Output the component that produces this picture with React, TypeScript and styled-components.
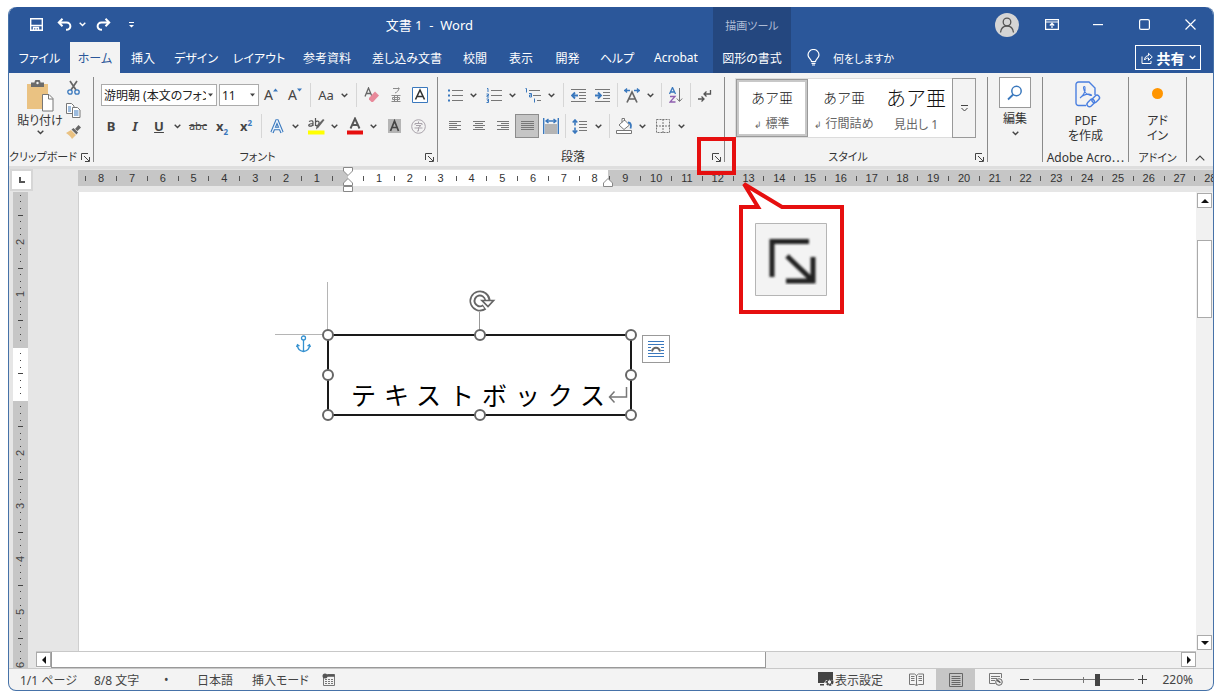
import React from 'react';
import styled, { createGlobalStyle, css } from 'styled-components';

const BLUE = '#2b579a';
const ACCENT = '#3a78bd';
const INK = '#444';
const RED = '#e60f0f';
const UI_FONT = '"Noto Sans", "Noto Sans CJK JP", sans-serif';

const GlobalStyle = createGlobalStyle`
  *, *::before, *::after { box-sizing: border-box; }
  body { margin: 0; background: #fff; font-family: ${UI_FONT}; font-size: 12px; font-feature-settings: "palt"; color: #333; }
  button, select, input { font: inherit; color: inherit; font-feature-settings: inherit; margin: 0; }
  button { padding: 0; border: 0; background: none; display: inline-flex; align-items: center; justify-content: center; white-space: nowrap; }
  svg { display: block; flex: none; }
`;

const Desktop = styled.div`
  padding: 7px 9px 8px 8px;
`;
const Window = styled.div`
  position: relative;
  display: flex;
  flex-direction: column;
  min-height: calc(100vh - 15px);
  border: solid #4672a8;
  border-width: 0 1px 1px;
  border-radius: 8px;
  background: #f3f3f3;
`;

/* ---------- title bar and tabs ---------- */
const Header = styled.header`
  display: grid;
  grid-template-columns: 704px 78px 1fr;
  grid-template-rows: 35px 31px;
  background: ${BLUE};
  color: #fff;
  border-radius: 8px 8px 0 0;
`;
const TitleLeft = styled.div`
  display: flex;
  align-items: center;
  padding-left: 13px;
`;
const QuickButton = styled.button<{ $w: number }>`
  width: ${(p) => p.$w}px;
  height: 28px;
`;
const DocTitle = styled.h1`
  margin: 0 0 0 auto;
  padding-right: 240px;
  font-size: 13px;
  font-weight: 400;
  white-space: pre;
`;
const ContextTitle = styled.div`
  display: flex;
  align-items: center;
  justify-content: center;
  background: #24477f;
  color: #aebcd5;
  font-size: 11px;
`;
const TitleRight = styled.div`
  display: flex;
  align-items: center;
  justify-content: flex-end;
`;
const Avatar = styled.button`
  width: 24px;
  height: 24px;
  border-radius: 50%;
  background: #d5d5d5;
  margin-right: 10px;
`;
const WinButton = styled.button`
  width: 46px;
  height: 32px;
`;
const Tabs = styled.nav`
  display: flex;
`;
const Tab = styled.button<{ $active?: boolean; $w: number }>`
  width: ${(p) => p.$w}px;
  ${(p) => p.$active && css`background: #f3f3f3; color: ${BLUE};`}
`;
const ContextTab = styled.button`
  background: #24477f;
`;
const TabsRight = styled.div`
  display: flex;
  align-items: center;
  justify-content: space-between;
  padding: 0 12px 0 16px;
`;
const Tell = styled.button`
  gap: 13px;
  font-size: 11px;
`;
const Share = styled.button`
  width: 66px;
  height: 25px;
  gap: 4px;
  border: 1px solid #fff;
  font-size: 14px;
  font-weight: 700;
`;

/* ---------- ribbon ---------- */
const Ribbon = styled.section`
  display: flex;
  height: 93px;
  padding-top: 4px;
`;
const Divider = styled.div`
  width: 1px;
  margin-bottom: 4px;
  background: #8a8a8a;
`;
const Group = styled.div<{ $w: number }>`
  width: ${(p) => p.$w}px;
  display: flex;
  flex-direction: column;
`;
const GroupBody = styled.div`
  height: 72px;
  display: flex;
`;
const GroupLabel = styled.div<{ $kana?: boolean }>`
  display: flex;
  height: 16px;
  line-height: 18px;
  font-size: ${(p) => (p.$kana ? 11 : 12)}px;
  align-items: center;
  white-space: nowrap;
  > span { flex: 1; text-align: center; }
`;
const LauncherButton = styled.button`
  position: relative;
  width: 16px;
  height: 16px;
`;
const LaunchMark = styled.span`
  position: absolute;
  left: -11px;
  top: -12px;
  width: 39px;
  height: 38px;
  border: 4px solid ${RED};
  z-index: 2;
`;
const Rows = styled.div`
  display: flex;
  flex-direction: column;
  gap: 7px;
  padding: 6px 0 0 5px;
`;
const Row = styled.div`
  display: flex;
  height: 24px;
  align-items: center;
`;
const Tool = styled.button<{ $on?: boolean }>`
  width: 24px;
  height: 24px;
  color: ${INK};
  ${(p) => p.$on && css`background: #c5c5c5; border: 1px solid #8c8c8c;`}
`;
const DropTool = styled.button`
  width: 15px;
  height: 24px;
  padding-left: 3px;
  justify-content: flex-start;
`;
const Sep = styled.div<{ $w?: number }>`
  width: ${(p) => p.$w ?? 5}px;
  height: 24px;
  display: flex;
  justify-content: center;
  &::before { content: ""; width: 1px; background: #d6d6d6; }
`;
const Glyph = styled.span<{ $bold?: boolean; $italic?: boolean; $line?: string; $size?: number }>`
  font-size: ${(p) => p.$size ?? 14}px;
  font-weight: ${(p) => (p.$bold ? 700 : 400)};
  font-style: ${(p) => (p.$italic ? 'italic' : 'normal')};
  text-decoration: ${(p) => p.$line ?? 'none'};
  line-height: 16px;
  sub, sup { font-size: 8px; line-height: 1px; color: ${ACCENT}; }
`;
const Field = styled.label<{ $w: number }>`
  position: relative;
  width: ${(p) => p.$w}px;
  height: 22px;
  margin-left: 2px;
  border: 1px solid #ababab;
  background: #fff;
  svg { position: absolute; right: 3px; top: 8px; pointer-events: none; }
`;
const FieldSelect = styled.select`
  appearance: none;
  width: 100%;
  height: 20px;
  padding: 0 10px 0 2px;
  border: 0;
  background: none;
  font-size: 12px;
  color: #222;
`;

const Paste = styled.button`
  width: 52px;
  height: 66px;
  margin: 1px 0 0 5px;
  padding-top: 2px;
  flex-direction: column;
  justify-content: flex-start;
  gap: 1px;
  line-height: 16px;
`;
const ClipTools = styled.div`
  display: flex;
  flex-direction: column;
  button { width: 15px; height: 22px; }
`;

const Gallery = styled.div`
  display: flex;
  height: 60px;
  margin: 1px 0 0 10px;
  border: 1px solid #dcdcdc;
  border-right: 0;
  background: #fff;
`;
const StyleItem = styled.button<{ $on?: boolean }>`
  width: 72px;
  height: 58px;
  padding-top: 1px;
  flex-direction: column;
  ${(p) => p.$on && css`border: 3px solid #c8c8c8; outline: 1px solid #9a9a9a; outline-offset: -1px;`}
`;
const Sample = styled.span<{ $size: number }>`
  height: 32px;
  line-height: 32px;
  font-size: ${(p) => p.$size}px;
  font-weight: 300;
  font-feature-settings: normal;
  color: #111;
`;
const SampleName = styled.span`
  line-height: 20px;
  color: #666;
  small { font-size: 9px; }
`;
const MoreStyles = styled.button`
  width: 24px;
  height: 60px;
  margin: -1px 0 0;
  border: 1px solid #999;
  background: #f3f3f3;
`;
const BigButton = styled.button`
  flex: 1;
  height: 72px;
  flex-direction: column;
  justify-content: flex-start;
  line-height: 15px;
`;
const FindBox = styled.span`
  display: flex;
  align-items: center;
  justify-content: center;
  width: 32px;
  height: 31px;
  margin-bottom: 3px;
  border: 1px solid #999;
  background: #fff;
`;
const DropMark = styled.span`
  padding-top: 5px;
`;
const BigIcon = styled.span`
  display: flex;
  align-items: center;
  height: 36px;
  color: ${ACCENT};
`;
const Dot = styled.span`
  width: 11px;
  height: 11px;
  margin: -4px 0 0;
  border-radius: 50%;
  background: #ff9500;
`;
const Collapse = styled.button`
  flex: 1;
  align-self: flex-end;
  height: 16px;
`;

/* ---------- rulers ---------- */
const RulerRow = styled.div`
  display: flex;
  height: 26px;
  border-top: 3px solid #dedede;
  background: #e6e6e6;
`;
const TabCorner = styled.button`
  width: 23px;
  height: 22px;
  margin: 0 45px 0 1px;
  border: 2px solid #d6d6d6;
  background: #fff;
`;
const HRuler = styled.div`
  flex: 1;
  height: 16px;
  margin-top: 1px;
  display: flex;
  overflow: hidden;
  background: linear-gradient(to right, #c6c6c6 270px, #fff 270px, #fff 530px, #c6c6c6 530px);
`;
const HScale = styled.div<{ $n: number; $w: number }>`
  flex: none;
  display: grid;
  grid-template-columns: repeat(${(p) => p.$n}, minmax(0, 1fr));
  width: ${(p) => p.$w}px;
  &:first-child { margin-right: 16px; }
`;
const HMark = styled.span`
  display: flex;
  justify-content: center;
  font: 11px/17px "Liberation Sans", sans-serif;
  color: #333;
`;
const HTick = styled.i`
  align-self: center;
  width: 1px;
  height: 5px;
  background: #555;
`;
const Indent = styled.svg<{ $x: number; $y: number }>`
  position: absolute;
  left: ${(p) => p.$x}px;
  top: ${(p) => p.$y}px;
`;
const Work = styled.main`
  flex: 1;
  display: flex;
  background: #e6e6e6;
  border-bottom: 1px solid #c8c8c8;
`;
const VRuler = styled.div`
  width: 15px;
  height: 476px;
  margin: 0 8px 0 4px;
  display: grid;
  grid-template-rows: repeat(72, minmax(0, 1fr));
  background: linear-gradient(#c6c6c6 156px, #fff 156px, #fff 209px, #c6c6c6 209px);
`;
const VMark = styled.span`
  display: flex;
  align-items: center;
  justify-content: center;
  font: 11px/8px "Liberation Sans", sans-serif;
  color: #444;
  b { font-weight: 400; transform: rotate(-90deg); }
`;
const VTick = styled.i<{ $long?: boolean }>`
  width: ${(p) => (p.$long ? 5 : 1)}px;
  height: 1px;
  background: #444;
`;

/* ---------- document ---------- */
const Center = styled.div`
  flex: 1;
  display: flex;
  flex-direction: column;
`;
const Page = styled.article`
  flex: 1;
  position: relative;
  margin-left: 42px;
  border-left: 1px solid #cfcfcf;
  background: #fff;
`;
const TextFrame = styled.div`
  position: absolute;
  left: 248px;
  top: 142px;
  width: 305px;
  height: 82px;
  border: 2px solid #1a1a1a;
  display: flex;
  align-items: flex-end;
  gap: 3px;
  padding: 0 2px 6px 22px;
`;
const FrameText = styled.p`
  flex: 1;
  margin: 0;
  font-size: 25px;
  line-height: 26px;
  font-weight: 400;
  font-feature-settings: normal;
  text-align: justify;
  text-align-last: justify;
  color: #000;
`;
const Handles = styled.div`
  position: absolute;
  inset: -1px;
`;
const Handle = styled.i<{ $x: number; $y: number }>`
  position: absolute;
  left: calc(${(p) => p.$x}% - 6px);
  top: calc(${(p) => p.$y}% - 6px);
  width: 12px;
  height: 12px;
  border: 2px solid #666;
  border-radius: 50%;
  background: #fff;
`;
const OnPage = styled.svg<{ $x: number; $y: number }>`
  position: absolute;
  left: ${(p) => p.$x}px;
  top: ${(p) => p.$y}px;
`;
const LayoutOptions = styled.button`
  position: absolute;
  left: 563px;
  top: 143px;
  width: 28px;
  height: 28px;
  border: 1px solid #999;
  background: #fff;
`;
const Callout = styled.svg`
  position: absolute;
  left: 729px;
  top: 173px;
  z-index: 3;
`;

/* ---------- scroll bars ---------- */
const HScroll = styled.div`
  display: flex;
  height: 17px;
  border-top: 1px solid #c8c8c8;
  background: #f1f1f1;
`;
const ScrollButton = styled.button`
  width: 15px;
  height: 15px;
  border: 1px solid #aaa;
  background: #fff;
`;
const HThumb = styled.div`
  flex: 713 0 0;
  height: 16px;
  border: 1px solid #999;
  border-top-width: 0;
  background: #fff;
`;
const Spacer = styled.div<{ $grow: number }>`
  flex: ${(p) => p.$grow} 0 0;
`;
const VScroll = styled.div`
  width: 17px;
  display: flex;
  flex-direction: column;
  align-items: center;
  padding: 1px 0 18px;
  background: #f1f1f1;
`;
const VThumb = styled.div`
  flex: 77 0 0;
  width: 15px;
  border: 1px solid #aaa;
  background: #fff;
`;

/* ---------- status bar ---------- */
const Status = styled.footer`
  display: flex;
  height: 21px;
  align-items: center;
  padding: 0 20px 0 11px;
  border-radius: 0 0 8px 8px;
  color: ${INK};
`;
const StatusItem = styled.button<{ $w: number; $on?: boolean; $end?: boolean }>`
  width: ${(p) => p.$w}px;
  height: 21px;
  justify-content: ${(p) => (p.$on !== undefined ? 'center' : p.$end ? 'flex-end' : 'flex-start')};
  ${(p) => p.$on && css`background: #c6c6c6;`}
`;
const Zoom = styled.input`
  appearance: none;
  width: 101px;
  height: 12px;
  background:
    linear-gradient(#777, #777) 50% 50% / 1px 6px no-repeat,
    linear-gradient(#777, #777) 0 50% / 100% 1px no-repeat;
  &::-webkit-slider-thumb { appearance: none; width: 5px; height: 12px; background: #444; }
`;

/* ---------- icons ---------- */
const Chev = ({ c = '#444' }: { c?: string }) => (
  <svg width="7" height="5" viewBox="0 0 7 5" fill="none" stroke={c} strokeWidth="1.4"><path d="M.7.8 3.5 3.6 6.3.8" /></svg>
);
const Caret = () => <svg width="5" height="4" viewBox="0 0 5 4" fill="#444"><path d="M0 .5h5L2.5 3.5z" /></svg>;
const Lines = ({ rows, w = 12 }: { rows: [number, number][]; w?: number }) => (
  <svg width={w} height="12" viewBox={`0 0 ${w} 12`} stroke="#777" strokeWidth="1">
    {rows.map(([a, b], i) => <path key={i} d={`M${a} ${i * 2 + 1.5}H${b}`} />)}
  </svg>
);
const Launch = () => (
  <svg width="9" height="9" viewBox="0 0 9 9" fill="none" stroke="#444"><path d="M.5 7V.5H7M3 3l5 5M8.5 4v4.5H4" /></svg>
);
const Launcher = ({ mark }: { mark?: boolean }) => (
  <LauncherButton aria-label="詳細"><Launch />{mark && <LaunchMark />}</LauncherButton>
);
const Arrow = ({ d }: { d: string }) => <svg width="8" height="8" viewBox="0 0 8 8" fill="#111"><path d={d} /></svg>;
const FrameTool = ({ children, w = 18, h = 18 }: { children: React.ReactNode; w?: number; h?: number }) => (
  <svg width={w} height={h} viewBox={`0 0 ${w} ${h}`} fill="none" stroke="#777">{children}</svg>
);

const tabs: [string, number, boolean?][] = [
  ['ファイル', 61], ['ホーム', 50, true], ['挿入', 46], ['デザイン', 60], ['レイアウト', 66], ['参考資料', 70],
  ['差し込み文書', 90], ['校閲', 46], ['表示', 46], ['開発', 47], ['ヘルプ', 52], ['Acrobat', 66],
];

const leftMarks = Array.from({ length: 17 }, (_, i) => (i % 2 ? String(8 - (i - 1) / 2) : ''));
const rightMarks = Array.from({ length: 56 }, (_, i) => (i % 2 ? String((i + 1) / 2) : ''));
const vNumbers: Record<number, string> = { 7: '2', 15: '1', 39: '2', 47: '3', 55: '4', 63: '5', 71: '6' };
const handles = [[0, 0], [50, 0], [100, 0], [0, 50], [100, 50], [0, 100], [50, 100], [100, 100]];

const Scale = ({ marks, w }: { marks: string[]; w: number }) => (
  <HScale $n={marks.length} $w={w}>
    {marks.map((m, i) => <HMark key={i}>{m || <HTick />}</HMark>)}
  </HScale>
);

const Drop = () => <DropTool aria-label="その他"><Chev /></DropTool>;

function TitleArea() {
  return (
    <Header>
      <TitleLeft>
        <QuickButton $w={28} aria-label="上書き保存">
          <svg width="13" height="13" viewBox="0 0 13 13" fill="none" stroke="#fff" strokeWidth="1.4"><path d="M.7.7h11.6v11.6H.7zM.7 7.5h11.6" /><path d="M3.5 12V9.5h5V12" /><path d="M6 10v2" /></svg>
        </QuickButton>
        <QuickButton $w={28} aria-label="元に戻す">
          <svg width="15" height="13" viewBox="0 0 15 13" fill="none" stroke="#fff" strokeWidth="2"><path d="M5.5.8 1.8 4.5l3.7 3.7M2 4.5h7.5c5 0 5.5 7.3-.5 7.3" /></svg>
        </QuickButton>
        <QuickButton $w={8} aria-label="元に戻す履歴"><Chev c="#fff" /></QuickButton>
        <QuickButton $w={34} aria-label="やり直し">
          <svg width="15" height="13" viewBox="0 0 15 13" fill="none" stroke="#fff" strokeWidth="2"><path d="M9.5.8l3.7 3.7-3.7 3.7M13 4.5H5.5c-5 0-5.5 7.3.5 7.3" /></svg>
        </QuickButton>
        <QuickButton $w={22} aria-label="クイック アクセスのカスタマイズ">
          <svg width="5" height="6" viewBox="0 0 5 6" fill="#fff"><path d="M0 0h5v1H0zM0 3h5L2.5 5.5z" /></svg>
        </QuickButton>
        <DocTitle>{'文書 1  -  Word'}</DocTitle>
      </TitleLeft>
      <ContextTitle>描画ツール</ContextTitle>
      <TitleRight>
        <Avatar aria-label="アカウント">
          <svg width="16" height="16" viewBox="0 0 16 16" fill="none" stroke="#555" strokeWidth="1.3"><circle cx="8" cy="5" r="3.8" /><path d="M1.5 15.5c.5-4 3-6.5 6.5-6.5s6 2.5 6.5 6.5" /></svg>
        </Avatar>
        <WinButton aria-label="リボンの表示オプション">
          <svg width="14" height="11" viewBox="0 0 14 11" fill="none" stroke="#fff" strokeWidth="1.2"><path d="M.6.6h12.8v9.8H.6zM.6 3h12.8M7 9V4.5M4.8 6.5 7 4.3l2.2 2.2" /></svg>
        </WinButton>
        <WinButton aria-label="最小化"><svg width="10" height="2" viewBox="0 0 10 2" fill="#fff"><path d="M0 0h10v1.2H0z" /></svg></WinButton>
        <WinButton aria-label="最大化"><svg width="11" height="11" viewBox="0 0 11 11" fill="none" stroke="#fff" strokeWidth="1.2"><rect x=".6" y=".6" width="9.8" height="9.8" rx="1.5" /></svg></WinButton>
        <WinButton aria-label="閉じる"><svg width="11" height="11" viewBox="0 0 11 11" stroke="#fff" strokeWidth="1.2"><path d="m.5.5 10 10M10.5.5l-10 10" /></svg></WinButton>
      </TitleRight>
      <Tabs>{tabs.map(([t, w, a]) => <Tab key={t} $w={w} $active={a}>{t}</Tab>)}</Tabs>
      <ContextTab>図形の書式</ContextTab>
      <TabsRight>
        <Tell>
          <svg width="13" height="17" viewBox="0 0 13 17" fill="none" stroke="#fff" strokeWidth="1.2"><path d="M4.5 12.5c0-2-3.5-3.5-3.5-6.5a5.5 5.5 0 0 1 11 0c0 3-3.5 4.5-3.5 6.5zM4.5 14.3h4M5 16h3" /></svg>
          何をしますか
        </Tell>
        <Share>
          <svg width="12" height="12" viewBox="0 0 12 12" fill="none" stroke="#fff"><path d="M1 4.5v7h9V9M3.5 8c.3-3 1.8-4.3 4-4.3V1.3L11.3 5 7.5 8.3V6C6 6 4.7 6.5 3.5 8z" /></svg>
          共有
          <Chev c="#fff" />
        </Share>
      </TabsRight>
    </Header>
  );
}

function ClipboardGroup() {
  return (
    <Group $w={84}>
      <GroupBody>
        <Paste>
          <svg width="28" height="32" viewBox="0 0 28 32"><path d="M1 4h21v25H1z" fill="#eac282" /><path d="M5 2.5h3.5a3 3 0 0 1 6 0H18V7H5z" fill="#6b6b6b" /><circle cx="11.5" cy="3" r="1.2" fill="#f3f3f3" /><path d="M16.5 14.5h6.5l4 4v12.5H16.5z" fill="#fff" stroke="#777" /><path d="M22.5 14.5V19H27" fill="none" stroke="#777" /></svg>
          <span>貼り付け</span>
          <Chev />
        </Paste>
        <ClipTools>
          <button aria-label="切り取り">
            <svg width="13" height="16" viewBox="0 0 13 16" fill="none"><path d="M3 1l6 9M10 1 4 10" stroke="#666" strokeWidth="1.7" /><circle cx="3" cy="12" r="2.2" stroke={ACCENT} strokeWidth="1.3" /><circle cx="10" cy="12" r="2.2" stroke={ACCENT} strokeWidth="1.3" /></svg>
          </button>
          <button aria-label="コピー">
            <svg width="15" height="15" viewBox="0 0 15 15" fill="#fff" stroke="#777"><path d="M.5.5h5l2.5 2.5v7.5H.5z" /><path d="M6.5 4.5h5l2.5 2.5v7.5H6.5z" /><path d="M2 4h3M2 6h3M2 8h3M8 8h4.5M8 10h4.5M8 12h4.5" stroke={ACCENT} /></svg>
          </button>
          <button aria-label="書式のコピー">
            <svg width="15" height="14" viewBox="0 0 15 14"><path d="m0 8 5-3 5 5-4 4c-1-2-3-4-6-6z" fill="#eac282" /><path d="m5.5 4.5 2-1.5L12 7.5 10.5 9.5z" fill="#666" /><path d="m9 4 3.5-4L15 2.5 11.5 6z" fill="#666" /></svg>
          </button>
        </ClipTools>
      </GroupBody>
      <GroupLabel $kana><span>クリップボード</span><Launcher /></GroupLabel>
    </Group>
  );
}

function FontGroup() {
  return (
    <Group $w={343}>
      <GroupBody>
        <Rows>
          <Row>
            <Field $w={116}><FieldSelect aria-label="フォント"><option>游明朝 (本文のフォント)</option></FieldSelect><Caret /></Field>
            <Field $w={40}><FieldSelect aria-label="フォント サイズ"><option>11</option></FieldSelect><Caret /></Field>
            <Tool aria-label="フォント サイズの拡大"><Glyph>A</Glyph><svg width="5" height="14" viewBox="0 0 5 14" fill={ACCENT}><path d="M0 3.5h5L2.5.5z" /></svg></Tool>
            <Tool aria-label="フォント サイズの縮小"><Glyph>A</Glyph><svg width="5" height="14" viewBox="0 0 5 14" fill={ACCENT}><path d="M0 .5h5L2.5 3.5z" /></svg></Tool>
            <Sep $w={7} />
            <Tool aria-label="文字種の変換"><Glyph $size={13}>Aa</Glyph></Tool><Drop />
            <Sep $w={7} />
            <Tool aria-label="書式のクリア">
              <svg width="16" height="16" viewBox="0 0 16 16"><path d="M1 9.5 4.5 1 8 9.5M2.3 6.5h4.5" fill="none" stroke="#666" strokeWidth="1.3" /><path d="m5 11 6-6.5 4 4-6 6.5H7.5L5 12.5z" fill="#e8899a" /></svg>
            </Tool>
            <Tool aria-label="ルビ">
              <svg width="12" height="16" viewBox="0 0 12 16" fill="none" stroke="#8a8a8a"><path d="M3 1.5h6C8.5 3.5 7.5 5 5 6M8.5.5l1 1M1.5 8.5h9M1.5 14.5h9M4.5 8.5v6M7.5 8.5v6M2.5 10.5h7v2h-7z" /></svg>
            </Tool>
            <Tool aria-label="囲み線">
              <svg width="16" height="16" viewBox="0 0 16 16" fill="none"><path d="M.5.5h15v15H.5z" fill="#fff" stroke={ACCENT} /><path d="M3.5 12.5 8 3l4.5 9.5M5 9.5h6" stroke="#333" strokeWidth="1.6" /></svg>
            </Tool>
          </Row>
          <Row>
            <Tool aria-label="太字"><Glyph $bold $size={13}>B</Glyph></Tool>
            <Tool aria-label="斜体"><Glyph $bold $italic $size={13}>I</Glyph></Tool>
            <Tool aria-label="下線"><Glyph $bold $size={13} $line="underline">U</Glyph></Tool><Drop />
            <Tool aria-label="取り消し線"><Glyph $size={11} $line="line-through">abc</Glyph></Tool>
            <Tool aria-label="下付き"><Glyph $bold $size={13}>x<sub>2</sub></Glyph></Tool>
            <Tool aria-label="上付き"><Glyph $bold $size={13}>x<sup>2</sup></Glyph></Tool>
            <Sep $w={7} />
            <Tool aria-label="文字の効果">
              <svg width="14" height="15" viewBox="0 0 14 15" fill="none"><path d="M2 13.5 7 1.5l5 12M4 9.5h6" stroke={ACCENT} strokeWidth="3.4" strokeLinejoin="round" /><path d="M2 13.5 7 1.5l5 12M4 9.5h6" stroke="#eaf3fc" strokeWidth="1.3" /></svg>
            </Tool><Drop />
            <Tool aria-label="蛍光ペンの色">
              <svg width="17" height="18" viewBox="0 0 17 18" fill="none"><path d="M0 13.5h16.5V17.5H0z" fill="#ff0" /><path d="M1 4.5c3-1.5 4-.5 4 1V9M5 6.5c-5 0-5 2.7-3 2.7 1.5 0 3-.7 3-2M7.5 1v8M7.5 5c2-2 4-.5 3.5 1.5S9 9.5 7.5 8" stroke="#555" strokeWidth="1.2" /><path d="m16.5 3-6 7.5L8 12.5l.5-3.5L15 2z" fill="#666" /></svg>
            </Tool><Drop />
            <Tool aria-label="フォントの色">
              <svg width="16" height="18" viewBox="0 0 16 18" fill="none"><path d="M0 13.5h16V17.5H0z" fill={RED} /><path d="M3.5 11.5 8 1.5l4.5 10M5 8h6" stroke="#555" strokeWidth="1.9" /></svg>
            </Tool><Drop />
            <Tool aria-label="文字の網かけ">
              <svg width="13" height="14" viewBox="0 0 13 14" fill="none"><path d="M0 0h13v14H0z" fill="#b5b5b5" /><path d="m2.5 12 4-10 4 10M4 8.5h5" stroke="#444" strokeWidth="1.7" /></svg>
            </Tool>
            <Tool aria-label="囲い文字">
              <svg width="15" height="15" viewBox="0 0 15 15" fill="none" stroke="#a9a3ab"><circle cx="7.5" cy="7.5" r="6.8" /><path d="M7.5 2.5v1.5M4 6V4.5h7V6M5 6.5h5L7.5 8.5V12H6M3.5 9h8" /></svg>
            </Tool>
          </Row>
        </Rows>
      </GroupBody>
      <GroupLabel $kana><span>フォント</span><Launcher /></GroupLabel>
    </Group>
  );
}

function ParagraphGroup() {
  return (
    <Group $w={286}>
      <GroupBody>
        <Rows>
          <Row>
            <Tool aria-label="箇条書き"><FrameTool w={16} h={14}><path d="M5 2.5h11M5 7.5h11M5 12.5h11" /><path d="M1 2.5h2M1 7.5h2M1 12.5h2" stroke={ACCENT} strokeWidth="2" /></FrameTool></Tool><Drop />
            <Tool aria-label="段落番号"><FrameTool w={16} h={15}><path d="M5 2.5h11M5 7.5h11M5 12.5h11" /><path d="M1 .5h1v3.5M.5 6h2v1.5H1V9h2M.5 11h2v3.5h-2M1 12.7h1.5" stroke={ACCENT} /></FrameTool></Tool><Drop />
            <Tool aria-label="アウトライン"><FrameTool w={16} h={15}><path d="M4 2.5h11M8 7.5h8M12 12.5h4" /><path d="M.5.5h1v4M4 5.5h2.5V9H4.5V7H6M9.5 10.5v4" stroke={ACCENT} /></FrameTool></Tool><Drop />
            <Sep $w={7} />
            <Tool aria-label="インデントを減らす"><FrameTool w={16} h={13}><path d="M0 .5h15M8 3.5h7M8 6.5h7M8 9.5h7M0 12.5h15" /><path d="M7 6.5H1.5M4 3.5l-3 3 3 3" stroke={ACCENT} strokeWidth="1.8" /></FrameTool></Tool>
            <Tool aria-label="インデントを増やす"><FrameTool w={16} h={13}><path d="M0 .5h15M8 3.5h7M8 6.5h7M8 9.5h7M0 12.5h15" /><path d="M0 6.5h5.5M3 3.5l3 3-3 3" stroke={ACCENT} strokeWidth="1.8" /></FrameTool></Tool>
            <Sep />
            <Tool aria-label="拡張書式"><FrameTool w={16} h={15}><path d="M3 14.5 8 4l5 10.5M5 11h6" stroke="#666" strokeWidth="1.7" /><path d="M0 2.5h6M3 .5l-2 2 2 2M10 2.5h6M13 .5l2 2-2 2" stroke={ACCENT} strokeWidth="1.4" /></FrameTool></Tool><Drop />
            <Sep />
            <Tool aria-label="並べ替え"><FrameTool w={14} h={16}><path d="M.5 7 3.5.5 6.5 7M1.5 5h4" stroke={ACCENT} strokeWidth="1.3" /><path d="M1 9.5h5L1 15h5.5" stroke="#9060b0" strokeWidth="1.3" /><path d="M10.5 1v13M7.8 11.5l2.7 3 2.7-3" /></FrameTool></Tool>
            <Sep />
            <Tool aria-label="編集記号の表示"><FrameTool w={14} h={13}><path d="M12.5 1v4H6M8.5 2.5 6 5l2.5 2.5M0 10h6M3.5 7.5 6 10l-2.5 2.5" stroke="#555" strokeWidth="1.3" /></FrameTool></Tool>
          </Row>
          <Row>
            <Tool aria-label="左揃え"><Lines rows={[[0, 12], [0, 8], [0, 12], [0, 8], [0, 12]]} /></Tool>
            <Tool aria-label="中央揃え"><Lines rows={[[0, 12], [2, 10], [0, 12], [2, 10], [0, 12]]} /></Tool>
            <Tool aria-label="右揃え"><Lines rows={[[0, 12], [4, 12], [0, 12], [4, 12], [0, 12]]} /></Tool>
            <Tool $on aria-label="両端揃え"><Lines w={13} rows={[[0, 13], [0, 13], [0, 13], [0, 13], [0, 13]]} /></Tool>
            <Tool aria-label="均等割り付け"><FrameTool w={16} h={16}><path d="M2 7h12M2 9h12M2 11h12M2 13h12M2 15h12" /><path d="M.7 0v16M15.3 0v16M3 3h10M5.5 1 3 3l2.5 2M10.5 1 13 3l-2.5 2" stroke={ACCENT} strokeWidth="1.4" /></FrameTool></Tool>
            <Sep />
            <Tool aria-label="行間"><FrameTool w={16} h={15}><path d="M7 2.5h8M7 5.5h8M7 8.5h8M7 11.5h8" /><path d="M3 1v5.5M.7 3.5 3 1l2.3 2.5M3 8.5V14M.7 11.5 3 14l2.3-2.5" stroke={ACCENT} strokeWidth="1.6" /></FrameTool></Tool><Drop />
            <Sep />
            <Tool aria-label="塗りつぶし"><FrameTool w={17} h={16}><path d="M.5 12.5h15v3H.5z" fill="#fff" /><path d="m3 7 5.5-5 5 5L8 11.5zM6 4.5V.5h2.5V3" fill="#fff" /><path d="M12 4.5c3 0 3.5 3 2.5 6" stroke={ACCENT} strokeWidth="1.8" /></FrameTool></Tool><Drop />
            <Tool aria-label="罫線"><FrameTool w={14} h={14}><path d="M.5.5h13v13H.5zM7 0v14M0 7h14" strokeDasharray="2 1" /></FrameTool></Tool><Drop />
          </Row>
        </Rows>
      </GroupBody>
      <GroupLabel><span>段落</span><Launcher mark /></GroupLabel>
    </Group>
  );
}

function RibbonArea() {
  return (
    <Ribbon>
      <ClipboardGroup /><Divider />
      <FontGroup /><Divider />
      <ParagraphGroup /><Divider />
      <Group $w={262}>
        <GroupBody>
          <Gallery>
            <StyleItem $on><Sample $size={14}>あア亜</Sample><SampleName><small>↲</small> 標準</SampleName></StyleItem>
            <StyleItem><Sample $size={14}>あア亜</Sample><SampleName><small>↲</small> 行間詰め</SampleName></StyleItem>
            <StyleItem><Sample $size={20}>あア亜</Sample><SampleName>見出し 1</SampleName></StyleItem>
            <MoreStyles aria-label="その他のスタイル">
              <svg width="7" height="7" viewBox="0 0 7 7" fill="none" stroke="#444"><path d="M0 .5h7M.5 3l3 3 3-3" /></svg>
            </MoreStyles>
          </Gallery>
        </GroupBody>
        <GroupLabel $kana><span>スタイル</span><Launcher /></GroupLabel>
      </Group>
      <Divider />
      <Group $w={54}>
        <BigButton>
          <FindBox><svg width="16" height="16" viewBox="0 0 16 16" fill="none" stroke={ACCENT} strokeWidth="1.5"><circle cx="9.5" cy="6" r="4.7" /><path d="M6.2 9.5 1 14.5" strokeWidth="1.8" /></svg></FindBox>
          <span>編集</span>
          <DropMark><Chev /></DropMark>
        </BigButton>
      </Group>
      <Divider />
      <Group $w={85}>
        <BigButton>
          <BigIcon>
            <svg width="33" height="28" viewBox="-6 0 33 28" fill="none" stroke="#4a7fe0" strokeWidth="1.4"><path d="M11 24.5H3.5a2.5 2.5 0 0 1-2.5-2.5V3.5A2.5 2.5 0 0 1 3.5 1H14l6 6v7" /><path d="M5 17c4-3 5.500-7 5-10.500-.2-1.500-1.700-1.300-1.500.5.500 4 3 6.500 7 7.500 1.500.3 1.500-1-.5-1.300-3.500-.4-7 .8-10 3.800z" strokeWidth="1.1" /><rect x="11.500" y="19.500" width="8.500" height="5" rx="2.500" transform="rotate(-45 15.700 22)" /><rect x="16.500" y="15.500" width="8.500" height="5" rx="2.500" transform="rotate(-45 20.700 18)" /></svg>
          </BigIcon>
          <span>PDF</span>
          <span>を作成</span>
        </BigButton>
        <GroupLabel><span>Adobe Acro⋯</span></GroupLabel>
      </Group>
      <Divider />
      <Group $w={57}>
        <BigButton>
          <BigIcon><Dot /></BigIcon>
          <span>アド</span>
          <span>イン</span>
        </BigButton>
        <GroupLabel $kana><span>アドイン</span></GroupLabel>
      </Group>
      <Divider />
      <Collapse aria-label="リボンを折りたたむ"><svg width="10" height="6" viewBox="0 0 10 6" fill="none" stroke="#444" strokeWidth="1.2"><path d="m.7 5.3 4.3-4.3 4.3 4.3" /></svg></Collapse>
    </Ribbon>
  );
}

function DocumentArea() {
  return (
    <Work>
      <VRuler>
        {Array.from({ length: 72 }, (_, i) => (
          <VMark key={i}>
            {vNumbers[i] ? <b>{vNumbers[i]}</b> : i === 23 || i === 31 ? null : <VTick $long={i % 8 === 3} />}
          </VMark>
        ))}
      </VRuler>
      <Center>
        <Page>
          <OnPage $x={196} $y={90} width="54" height="54" viewBox="0 0 54 54" stroke="#b5b5b5"><path d="M52.5 0v52M0 52.5h52" /></OnPage>
          <OnPage $x={217} $y={143} width="15" height="18" viewBox="0 0 15 18" fill="none" stroke="#3591d0" strokeWidth="1.3"><circle cx="7.5" cy="3" r="2" /><path d="M7.5 5v11.5M1.5 10c0 4 2.5 6 6 6.5 3.5-.5 6-2.5 6-6.5M.5 12l1-2.3L3.5 11M14.5 12l-1-2.3-2 1.3" /></OnPage>
          <OnPage $x={390} $y={98} width="28" height="46" viewBox="0 0 28 46" fill="none">
            <path d="M10.5 22v20" stroke="#999" />
            <path d="M18.5 11A7.5 7.5 0 1 0 15.5 17" stroke="#666" strokeWidth="6" />
            <path d="M18.3 10A7.5 7.5 0 1 0 14.5 17.5" stroke="#fff" strokeWidth="2.4" />
            <path d="M13 10.5h11.5l-5.5 6z" fill="#fff" stroke="#666" strokeWidth="1.7" />
          </OnPage>
          <TextFrame>
            <FrameText>テキストボックス</FrameText>
            <svg width="20" height="22" viewBox="0 0 20 22" fill="none" stroke="#777" strokeWidth="1.5"><path d="M18.500 1v10H1.500M6.500 5.500l-5 5.500 5 5.500" /></svg>
            <Handles>{handles.map(([x, y]) => <Handle key={`${x}-${y}`} $x={x} $y={y} />)}</Handles>
          </TextFrame>
          <LayoutOptions aria-label="レイアウト オプション">
            <svg width="16" height="16" viewBox="0 0 16 16" fill="none" stroke={ACCENT}><path d="M0 .5h16M0 3.5h16M0 6.5h3M13 6.5h3M0 9.5h3M13 9.5h3M0 12.5h16M0 15.5h16" /><path d="M4 10.5c1-5 7-5 8 0" stroke="#666" strokeWidth="2" /></svg>
          </LayoutOptions>
        </Page>
        <HScroll>
          <ScrollButton aria-label="左へ"><Arrow d="M6 0v8L2 4z" /></ScrollButton>
          <HThumb />
          <Spacer $grow={415} />
          <ScrollButton aria-label="右へ"><Arrow d="M2 0v8l4-4z" /></ScrollButton>
        </HScroll>
      </Center>
      <VScroll>
        <ScrollButton aria-label="上へ"><Arrow d="M0 6h8L4 2z" /></ScrollButton>
        <Spacer $grow={32} />
        <VThumb />
        <Spacer $grow={319} />
        <ScrollButton aria-label="下へ"><Arrow d="M0 2h8L4 6z" /></ScrollButton>
      </VScroll>
    </Work>
  );
}

function StatusArea() {
  return (
    <Status>
      <StatusItem $w={74}>1/1 ページ</StatusItem>
      <StatusItem $w={70}>8/8 文字</StatusItem>
      <StatusItem $w={33}>•</StatusItem>
      <StatusItem $w={55}>日本語</StatusItem>
      <StatusItem $w={70}>挿入モード</StatusItem>
      <StatusItem $w={20} aria-label="マクロの記録">
        <svg width="13" height="13" viewBox="0 0 13 13" fill="none" stroke="#777"><path d="M1.5 4v8.5h11V1.5H6" /><path d="M5 2.5h7.5" stroke="#555" strokeWidth="2.5" /><circle cx="3" cy="3" r="2.5" fill="#555" stroke="none" /><path d="M3 6.5h8M3 8.5h8M3 10.5h8" strokeDasharray="2 1" /></svg>
      </StatusItem>
      <Spacer $grow={1} />
      <StatusItem $w={79}>
        <svg width="17" height="15" viewBox="0 0 17 15"><path d="M0 0h15v8H8l-2 3H0zM2 12h4v1.5H2z" fill="#444" /><circle cx="11.5" cy="10" r="3" fill="#f3f3f3" stroke="#444" strokeWidth="2" strokeDasharray="2 .8" /><circle cx="11.5" cy="10" r="2.3" fill="none" stroke="#444" /></svg>
        表示設定
      </StatusItem>
      <StatusItem $w={39} $on={false} aria-label="閲覧モード">
        <svg width="15" height="13" viewBox="0 0 15 13" fill="none" stroke="#777"><path d="M7.5 2v10.5M.5 1h5l2 1.5L9.5 1h5v10.5h-5l-2 1-2-1h-5zM2 3.5h3.5M2 5.5h3.5M2 7.5h3.5M9.5 3.5H13M9.5 5.5H13M9.5 7.5H13" /></svg>
      </StatusItem>
      <StatusItem $w={39} $on aria-label="印刷レイアウト">
        <svg width="14" height="14" viewBox="0 0 14 14" fill="none" stroke="#666"><path d="M.5.5h13v13H.5zM2.5 3.5h9M2.5 5.5h9M2.5 7.5h9M2.5 9.5h9M2.5 11.5h9" /></svg>
      </StatusItem>
      <StatusItem $w={41} $on={false} aria-label="Web レイアウト">
        <svg width="14" height="13" viewBox="0 0 14 13" fill="none" stroke="#777"><path d="M12.5 5V.5H.5v10h6M2 3.5h9M2 5.5h6M2 7.5h4" /><circle cx="10" cy="9" r="3.3" fill="#eee" stroke="#666" /><path d="M8 8c2-1 2 2 3.5 1" stroke="#555" strokeWidth="1.5" /></svg>
      </StatusItem>
      <StatusItem $w={17} $on={false} aria-label="縮小"><svg width="9" height="9" viewBox="0 0 9 9" stroke="#444"><path d="M0 4.5h9" /></svg></StatusItem>
      <Zoom type="range" min="0" max="100" defaultValue="65" aria-label="ズーム" />
      <StatusItem $w={17} $on={false} aria-label="拡大"><svg width="9" height="9" viewBox="0 0 9 9" stroke="#444"><path d="M0 4.5h9M4.5 0v9" /></svg></StatusItem>
      <StatusItem $w={42} $end>220%</StatusItem>
    </Status>
  );
}

export default function App() {
  return (
    <Desktop>
      <GlobalStyle />
      <Window>
        <TitleArea />
        <RibbonArea />
        <RulerRow>
          <TabCorner aria-label="タブ セレクター"><svg width="6" height="6" viewBox="0 0 6 6" fill="none" stroke="#555" strokeWidth="2"><path d="M1 0v5h5" /></svg></TabCorner>
          <HRuler>
            <Scale marks={leftMarks} w={262} />
            <Scale marks={rightMarks} w={862} />
          </HRuler>
        </RulerRow>
        <DocumentArea />
        <StatusArea />
        <Indent $x={334} $y={160} width="10" height="25" viewBox="0 0 10 25" fill="#fff" stroke="#888"><path d="M.5.5h9V4L5 8.5.5 4zM.5 18.5V16L5 11.5 9.5 16v2.5zM.5 19.5h9v5h-9z" /></Indent>
        <Indent $x={594} $y={171} width="10" height="9" viewBox="0 0 10 9" fill="#fff" stroke="#888"><path d="M.5 8.5V5L5 .5 9.5 5v3.5z" /></Indent>
        <Callout width="108" height="136" viewBox="0 0 108 136">
          <defs><filter id="soft"><feGaussianBlur stdDeviation="0.9" /></filter></defs>
          <path d="M3 27h17L6 4l38 23h60v105H3z" fill="#fff" stroke={RED} strokeWidth="4" />
          <path d="M17.5 43.5h71v72h-71z" fill="#f3f3f3" stroke="#b5b5b5" />
          <path d="M34 97V61.5h37M49 76l25 24M75 77v24H48" fill="none" stroke="#222" strokeWidth="5" filter="url(#soft)" />
        </Callout>
      </Window>
    </Desktop>
  );
}
